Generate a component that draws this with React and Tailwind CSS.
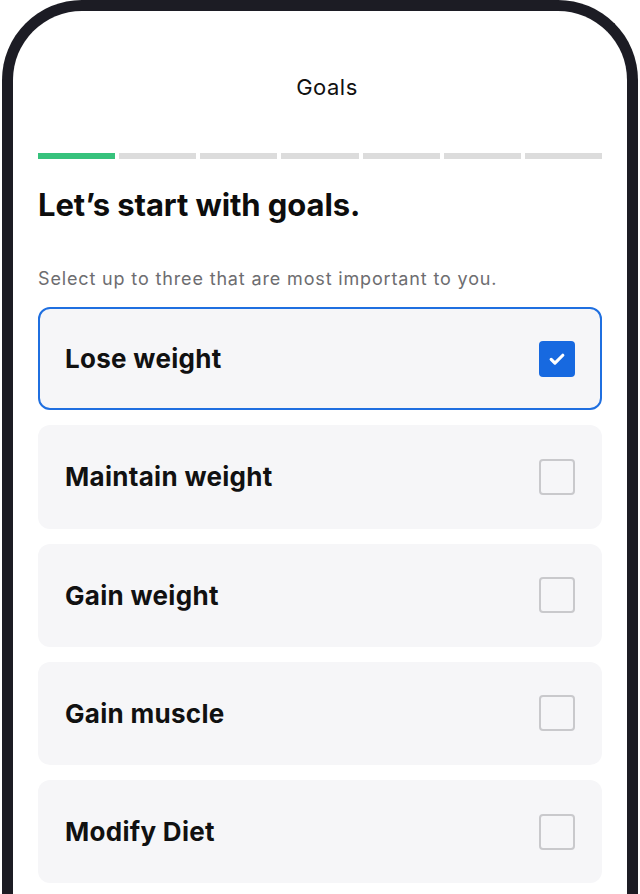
import { useState } from "react";

const goals = ["Lose weight", "Maintain weight", "Gain weight", "Gain muscle", "Modify Diet"];

function Checkbox({ checked }) {
  if (checked) {
    return (
      <span className="flex h-[36px] w-[36px] items-center justify-center rounded-[4px] bg-[#1769e0]">
        <svg width="20" height="20" viewBox="0 0 24 24" fill="none" stroke="white" strokeWidth="3.8" strokeLinecap="round" strokeLinejoin="round">
          <path d="M5 12.5l4.5 4.5L19 7.5" />
        </svg>
      </span>
    );
  }
  return <span className="block h-[36px] w-[36px] rounded-[4px] border-2 border-[#c9c9cc]" />;
}

export default function App() {
  const [selected, setSelected] = useState(["Lose weight"]);

  function toggle(goal) {
    setSelected((cur) =>
      cur.includes(goal) ? cur.filter((g) => g !== goal) : cur.length < 3 ? [...cur, goal] : cur
    );
  }

  return (
    <div className="h-[894px] w-[640px] overflow-hidden bg-white font-['Inter','Liberation_Sans',sans-serif]">
      <div className="mx-[2px] h-[940px] rounded-t-[80px] border-[11px] border-b-0 border-[#1c1c24] bg-white px-[25px]">
        <div className="mt-[61px] pl-[14px] text-center text-[22px] leading-[30px] tracking-[0.5px] text-[#111]">Goals</div>

        <div className="mt-[51px] flex gap-[4px]">
          {Array.from({ length: 7 }).map((_, i) => (
            <div key={i} className={`h-[6px] flex-1 ${i === 0 ? "bg-[#36c27c]" : "bg-[#dcdcdc]"}`} />
          ))}
        </div>

        <h1 className="mt-[27px] text-[31px] font-bold leading-[38px] tracking-[-0.1px] text-[#0d0d0d]">
          Let’s start with goals.
        </h1>

        <p className="mt-[42px] text-[18px] leading-[26px] tracking-[0.85px] text-[#6d6d70]">
          Select up to three that are most important to you.
        </p>

        <div className="mt-[15px] flex flex-col gap-[15px]">
          {goals.map((goal) => {
            const on = selected.includes(goal);
            return (
              <button
                key={goal}
                onClick={() => toggle(goal)}
                className={`flex h-[103.25px] shrink-0 items-center justify-between rounded-[12px] bg-[#f6f6f8] text-left ${
                  on ? "border-2 border-[#1f6fe0] px-[25px]" : "px-[27px]"
                }`}
              >
                <span className="text-[26px] font-bold tracking-[0.3px] text-[#111]">{goal}</span>
                <Checkbox checked={on} />
              </button>
            );
          })}
        </div>
      </div>
    </div>
  );
}
